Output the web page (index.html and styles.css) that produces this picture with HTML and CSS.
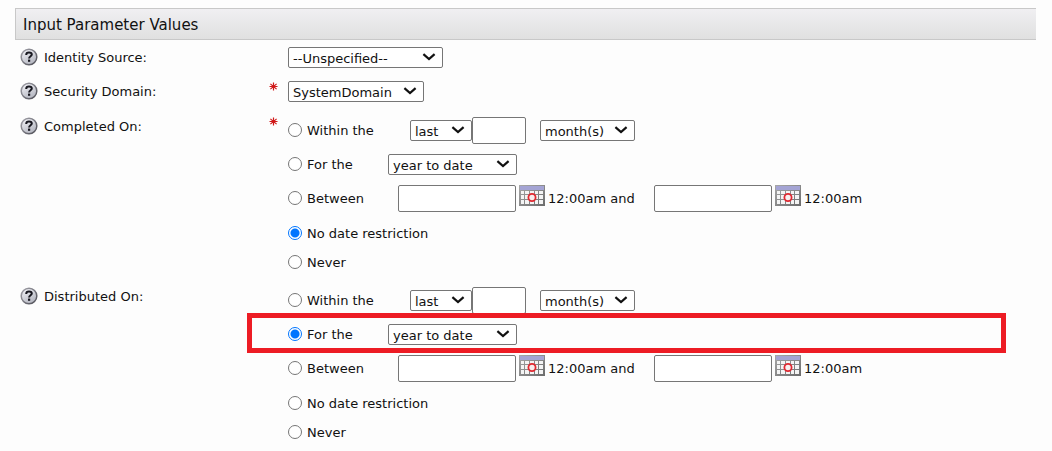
FILE: index.html
```html
<!DOCTYPE html>
<html lang="en">
<head>
<meta charset="utf-8">
<title>Input Parameter Values</title>
<link rel="stylesheet" href="styles.css">
</head>
<body>
<svg class="defs" aria-hidden="true">
  <defs>
    <linearGradient id="ball" x1="0" y1="0" x2="0.6" y2="1"><stop offset="0" stop-color="#f8f8fc"/><stop offset="1" stop-color="#b4b6c0"/></linearGradient>
    <linearGradient id="ring" x1="0" y1="0" x2="1" y2="1"><stop offset="0" stop-color="#a4a4ac"/><stop offset="1" stop-color="#4c4c54"/></linearGradient>
    <linearGradient id="frame" x1="0" y1="0" x2="1" y2="1"><stop offset="0" stop-color="#a8a8a8"/><stop offset="1" stop-color="#6c6c6c"/></linearGradient>
    <symbol id="help" viewBox="0 0 18 18">
      <circle cx="9" cy="9" r="7.8" fill="url(#ball)" stroke="url(#ring)" stroke-width="1.5"/>
      <path d="M6.2 7C6.2 5.3 7.4 4.6 9 4.6S11.8 5.3 11.8 6.6C11.8 8.3 9.1 8.2 9.1 10.4" fill="none" stroke="#181820" stroke-width="2"/>
      <path d="M8 11.6h2.2v2.2H8z" fill="#181820"/>
    </symbol>
    <symbol id="calendar" viewBox="0 0 26 21">
      <path d="M0 0h26v21H0z" fill="url(#frame)"/>
      <path d="M1 1h24v4H1z" fill="#a4a4d4"/>
      <path d="M2 6h3v3H2zM6 6h4v3H6zM11 6h4v3h-4zM16 6h3v3h-3zM20 6h4v3h-4zM2 10h3v4H2zM6 10h4v4H6zM11 10h4v4h-4zM16 10h3v4h-3zM20 10h4v4h-4zM2 15h3v4H2zM6 15h4v4H6zM11 15h4v4h-4zM16 15h3v4h-3zM20 15h4v4h-4z" fill="#f4f4f4"/>
      <circle cx="13" cy="12.5" r="3.6" fill="#f8eeee" stroke="#e02830" stroke-width="1.8"/>
    </symbol>
    <symbol id="star" viewBox="0 0 9 9">
      <path d="M4.5 0.5v8M0.5 4.5h8M1.4 1.9l6.2 5.2M7.6 1.9L1.4 7.1" stroke="#d01818" stroke-width="1.2"/>
    </symbol>
    <symbol id="arrow" viewBox="0 0 14 8"><path d="M1.4 1.2L7 6.1l5.6-4.9" fill="none" stroke="#111" stroke-width="2.2"/></symbol>
  </defs>
</svg>
<form class="panel">
  <h1 class="title">Input Parameter Values</h1>

  <div class="row">
    <div class="name"><svg class="help"><use href="#help"/></svg><label for="source">Identity Source:</label></div>
    <div class="line"><span class="pick wide"><select id="source"><option>--Unspecified--</option></select><svg><use href="#arrow"/></svg></span></div>
  </div>

  <div class="row">
    <div class="name"><svg class="help"><use href="#help"/></svg><label for="domain">Security Domain:</label><svg class="star"><use href="#star"/></svg></div>
    <div class="line"><span class="pick domain"><select id="domain"><option>SystemDomain</option></select><svg><use href="#arrow"/></svg></span></div>
  </div>

  <div class="row group" role="group" aria-labelledby="completed">
    <div class="name"><svg class="help"><use href="#help"/></svg><span id="completed">Completed On:</span><svg class="star"><use href="#star"/></svg></div>
    <div class="options">
      <div class="line">
        <label class="choice within"><input type="radio" name="completed">Within the</label>
        <span class="pick last"><select aria-label="Direction"><option>last</option></select><svg><use href="#arrow"/></svg></span>
        <input class="text count" type="text" aria-label="Count">
        <span class="pick unit"><select aria-label="Unit"><option>month(s)</option></select><svg><use href="#arrow"/></svg></span>
      </div>
      <div class="line">
        <label class="choice for"><input type="radio" name="completed">For the</label>
        <span class="pick period"><select aria-label="Period"><option>year to date</option></select><svg><use href="#arrow"/></svg></span>
      </div>
      <div class="line">
        <label class="choice between"><input type="radio" name="completed">Between</label>
        <input class="text date" type="text" aria-label="Start date">
        <button class="cal" type="button" aria-label="Pick start date"><svg><use href="#calendar"/></svg></button>
        <span class="time and">12:00am and</span>
        <input class="text date" type="text" aria-label="End date">
        <button class="cal" type="button" aria-label="Pick end date"><svg><use href="#calendar"/></svg></button>
        <span class="time">12:00am</span>
      </div>
      <div class="line tall"><label class="choice"><input type="radio" name="completed" checked>No date restriction</label></div>
      <div class="line short"><label class="choice"><input type="radio" name="completed">Never</label></div>
    </div>
  </div>

  <div class="row group" role="group" aria-labelledby="distributed">
    <div class="name"><svg class="help"><use href="#help"/></svg><span id="distributed">Distributed On:</span></div>
    <div class="options">
      <div class="line">
        <label class="choice within"><input type="radio" name="distributed">Within the</label>
        <span class="pick last"><select aria-label="Direction"><option>last</option></select><svg><use href="#arrow"/></svg></span>
        <input class="text count" type="text" aria-label="Count">
        <span class="pick unit"><select aria-label="Unit"><option>month(s)</option></select><svg><use href="#arrow"/></svg></span>
      </div>
      <div class="line marked">
        <label class="choice for"><input type="radio" name="distributed" checked>For the</label>
        <span class="pick period"><select aria-label="Period"><option>year to date</option></select><svg><use href="#arrow"/></svg></span>
      </div>
      <div class="line">
        <label class="choice between"><input type="radio" name="distributed">Between</label>
        <input class="text date" type="text" aria-label="Start date">
        <button class="cal" type="button" aria-label="Pick start date"><svg><use href="#calendar"/></svg></button>
        <span class="time and">12:00am and</span>
        <input class="text date" type="text" aria-label="End date">
        <button class="cal" type="button" aria-label="Pick end date"><svg><use href="#calendar"/></svg></button>
        <span class="time">12:00am</span>
      </div>
      <div class="line tall"><label class="choice"><input type="radio" name="distributed">No date restriction</label></div>
      <div class="line short"><label class="choice"><input type="radio" name="distributed">Never</label></div>
    </div>
  </div>
</form>
</body>
</html>
```
FILE: styles.css
```css
* { box-sizing: border-box; }
body {
  margin: 0;
  background: #fdfdfd;
  color: #111;
  font: 13px/18px Verdana, "DejaVu Sans", sans-serif;
}
.defs { position: absolute; width: 0; height: 0; }
.panel { padding: 8px 16px 0 15px; }
.title {
  margin: 0;
  padding: 6px 7px 4px;
  border: 1px solid #c8c8c8;
  border-width: 1px 0 1px 1px;
  background: linear-gradient(#f0eff2, #e0e0e0);
  font-size: 15px;
  font-weight: normal;
  line-height: 20px;
}
.row { display: grid; grid-template-columns: 273px 1fr; }
.group { padding-top: 5px; }
.group + .group { padding-top: 0; }
.name {
  display: flex;
  align-items: center;
  height: 34px;
  padding: 0 10px 0 5px;
}
.name label, .name span, .time { padding-top: 2px; }
.group .name { height: 26px; }
.help { width: 18px; height: 18px; margin-right: 6px; }
.star { width: 9px; height: 9px; margin: 0 0 10px auto; }
.line { display: flex; align-items: center; height: 34px; }
.options { padding-bottom: 10px; }
.tall { height: 36px; }
.short { height: 22px; }
.choice {
  display: flex;
  align-items: center;
  padding-top: 2px;
  white-space: nowrap;
}
.choice input {
  flex: none;
  appearance: none;
  width: 14px;
  height: 14px;
  margin: 0 5px 2px 0;
  border: 1px solid #767676;
  border-radius: 50%;
  background: #fff;
}
.choice input:checked {
  border-color: #0075ff;
  background: radial-gradient(circle, #0075ff 4px, #fff 5px);
}
.within { width: 122px; }
.for { width: 100px; }
.between { width: 110px; }
.pick { position: relative; height: 21px; }
.pick select {
  appearance: none;
  display: block;
  width: 100%;
  height: 100%;
  padding: 2px 4px 0;
  border: 1px solid #767676;
  border-radius: 2px;
  background: #fff;
  color: #111;
  font: inherit;
}
.pick svg {
  position: absolute;
  top: 6px;
  right: 7px;
  width: 14px;
  height: 8px;
  pointer-events: none;
}
.wide { width: 155px; }
.domain { width: 136px; }
.last { width: 62px; }
.unit { width: 95px; }
.period { width: 129px; }
.text {
  height: 27px;
  border: 1px solid #767676;
  border-radius: 2px;
  background: #fff;
  font: inherit;
}
.count { width: 54px; margin-right: 14px; }
.date { width: 118px; }
.cal {
  height: 21px;
  margin: 0 3px 5px;
  padding: 0;
  border: 0;
  background: none;
}
.cal svg { display: block; width: 26px; height: 21px; }
.and { width: 106px; }
.marked { position: relative; }
.marked::after {
  content: "";
  position: absolute;
  inset: -4px 30px -2px -41px;
  border: 5px solid #ed1c24;
  pointer-events: none;
}
```
